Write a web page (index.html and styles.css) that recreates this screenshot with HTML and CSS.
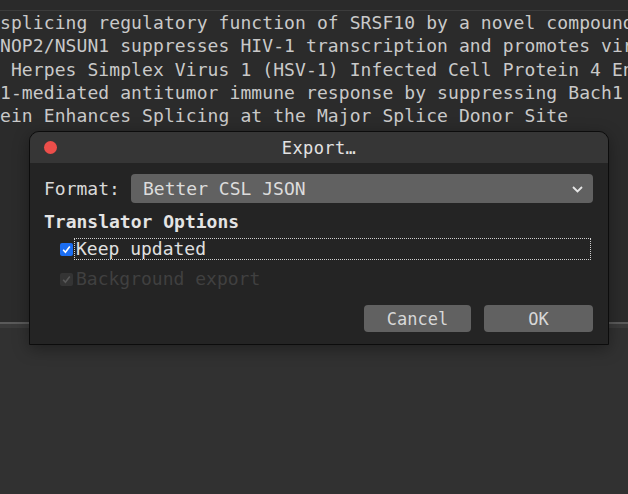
FILE: index.html
```html
<!DOCTYPE html>
<html>
<head>
<meta charset="utf-8">
<link rel="stylesheet" href="styles.css">
</head>
<body>
<div class="app">
  <div class="topband"></div>
  <div class="list">
    <div class="line">splicing regulatory function of SRSF10 by a novel compound</div>
    <div class="line">NOP2/NSUN1 suppresses HIV-1 transcription and promotes vir</div>
    <div class="line"> Herpes Simplex Virus 1 (HSV-1) Infected Cell Protein 4 En</div>
    <div class="line">1-mediated antitumor immune response by suppressing Bach1 </div>
    <div class="line">ein Enhances Splicing at the Major Splice Donor Site</div>
  </div>
  <div class="divider"></div>
  <div class="lower"></div>

  <div class="dialog">
    <div class="titlebar">
      <span class="close"></span>
      <span class="title">Export…</span>
    </div>
    <div class="body">
      <div class="format-row">
        <span class="label">Format:</span>
        <div class="select">
          <span>Better CSL JSON</span>
          <svg class="chev" width="11" height="7" viewBox="0 0 11 7"><path d="M1 1 L5.5 5.5 L10 1" fill="none" stroke="#e6e6e6" stroke-width="1.8"/></svg>
        </div>
      </div>
      <div class="section">Translator Options</div>
      <div class="opt focus">
        <span class="cb on"><svg width="13" height="13" viewBox="0 0 13 13"><path d="M3.2 6.8 L5.4 9.2 L9.8 3.6" fill="none" stroke="#fff" stroke-width="1.6"/></svg></span>
        <span class="opt-text">Keep updated</span>
      </div>
      <div class="opt disabled">
        <span class="cb off"><svg width="13" height="13" viewBox="0 0 13 13"><path d="M3.2 6.8 L5.4 9.2 L9.8 3.6" fill="none" stroke="#585858" stroke-width="1.6"/></svg></span>
        <span class="opt-text">Background export</span>
      </div>
      <div class="buttons">
        <button class="btn cancel">Cancel</button>
        <button class="btn ok">OK</button>
      </div>
    </div>
  </div>
</div>
</body>
</html>
```
FILE: styles.css
```css
html, body {
  margin: 0;
  padding: 0;
}
body {
  width: 628px;
  height: 494px;
  overflow: hidden;
  background: #313131;
  font-family: "DejaVu Sans Mono", "Liberation Mono", monospace;
  font-size: 18px;
}
.app {
  position: relative;
  width: 628px;
  height: 494px;
  display: flex;
  flex-direction: column;
}
.topband {
  height: 10px;
  background: #2a2a2a;
  border-bottom: 1px solid #3c3c3c;
}
.list {
  height: 311px;
  background: #2b2b2b;
  overflow: hidden;
}
.line {
  white-space: pre;
  line-height: 23.3px;
  letter-spacing: 0.09px;
  color: #c9c9c9;
  overflow: hidden;
}
.divider {
  height: 2px;
  background: #5a5a5a;
  border-bottom: 4px solid #3a3a3a;
}
.lower {
  flex: 1;
  background: #313131;
}
.dialog {
  position: absolute;
  left: 29px;
  top: 131px;
  width: 578px;
  height: 212px;
  border: 1px solid #0c0c0c;
  border-radius: 10px 10px 0 0;
  background: #242424;
  box-shadow: 0 4px 16px rgba(0,0,0,0.35);
  display: flex;
  flex-direction: column;
  overflow: hidden;
}
.titlebar {
  height: 31px;
  background: #363636;
  position: relative;
  display: flex;
  align-items: center;
  justify-content: center;
}
.close {
  position: absolute;
  left: 14px;
  top: 9px;
  width: 13px;
  height: 13px;
  border-radius: 50%;
  background: #ec4e4a;
}
.title {
  color: #e2e2e2;
  font-size: 17px;
  letter-spacing: 0.4px;
}
.body {
  flex: 1;
  padding: 11px 15px 12px 14px;
  display: flex;
  flex-direction: column;
}
.format-row {
  display: flex;
  align-items: center;
  height: 29px;
}
.label {
  color: #d9d9d9;
  width: 87px;
}
.select {
  flex: 1;
  height: 29px;
  background: #616161;
  border-radius: 4px;
  display: flex;
  align-items: center;
  justify-content: space-between;
  padding: 0 10px 0 12px;
  color: #dcdcdc;
}
.chev {
  margin-top: 1px;
}
.section {
  margin-top: 7px;
  color: #e4e4e4;
  font-weight: bold;
  line-height: 24px;
}
.opt {
  display: flex;
  align-items: center;
  margin-left: 16px;
  height: 22px;
}
.opt.focus {
  margin-top: 4px;
}
.opt.disabled {
  margin-top: 8px;
}
.cb {
  width: 13px;
  height: 13px;
  border-radius: 2px;
  display: flex;
  margin-right: 2px;
}
.cb.on {
  background: #1b6ef3;
}
.cb.off {
  background: #343434;
}
.opt-text {
  line-height: 20px;
  color: #e0e0e0;
}
.opt.focus .opt-text {
  flex: 1;
  outline: 1px dotted #d0d0d0;
  outline-offset: 0;
  margin-right: 3px;
  padding-left: 1px;
}
.opt.disabled .opt-text {
  color: #404040;
  padding-left: 1px;
}
.buttons {
  margin-top: auto;
  display: flex;
  justify-content: flex-end;
  gap: 13px;
}
.btn {
  font-family: "DejaVu Sans Mono", "Liberation Mono", monospace;
  font-size: 17px;
  color: #d8d8d8;
  background: #616161;
  border: none;
  border-radius: 4px;
  height: 27px;
  padding: 0;
}
.btn.cancel {
  width: 107px;
}
.btn.ok {
  width: 109px;
}
```
